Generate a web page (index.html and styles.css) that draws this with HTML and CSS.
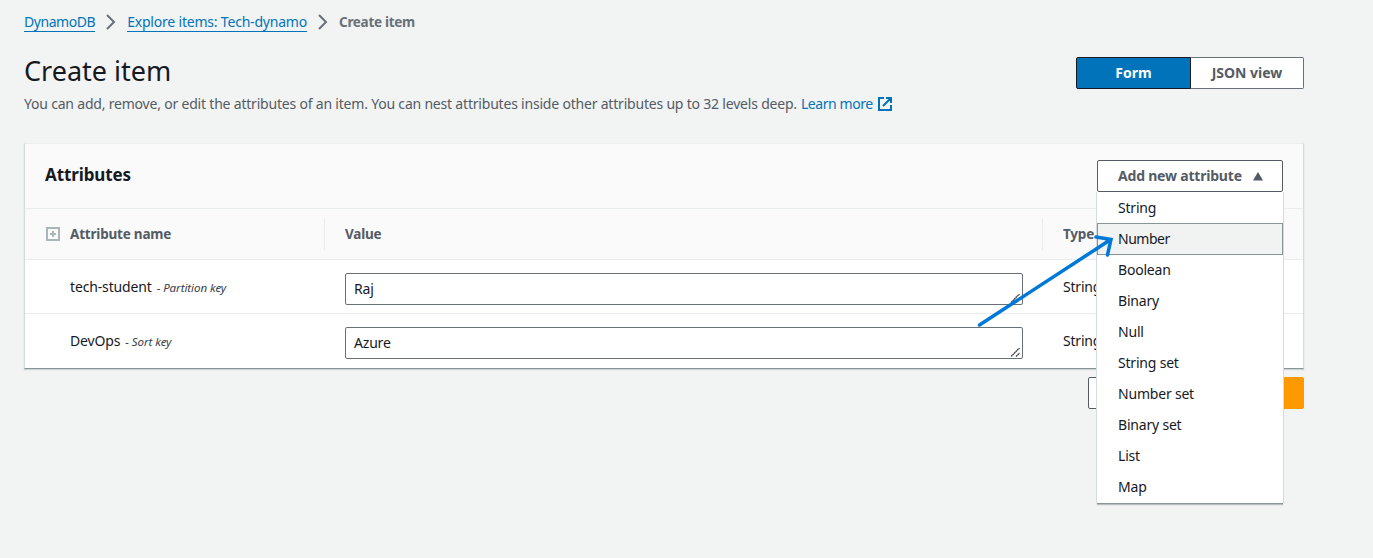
FILE: index.html
```html
<!DOCTYPE html>
<html lang="en">
<head>
<meta charset="utf-8">
<title>Create item</title>
<link rel="stylesheet" href="styles.css">
</head>
<body>
<nav class="breadcrumbs" aria-label="Breadcrumbs">
  <a class="crumb crumb-service" href="#">DynamoDB</a>
  <svg class="chevron" viewBox="0 0 10 16"><path d="M1 1l7 7-7 7"/></svg>
  <a class="crumb" href="#">Explore items: Tech-dynamo</a>
  <svg class="chevron" viewBox="0 0 10 16"><path d="M1 1l7 7-7 7"/></svg>
  <span class="crumb-current">Create item</span>
</nav>
<header class="page-header">
  <div class="intro">
    <h1 class="title">Create item</h1>
    <p class="description"><span class="lead">You can add, remove, or edit the attributes of an item. You can nest attributes inside other attributes up to 32 levels deep.</span><a class="learn" href="#">Learn more</a><svg class="external" viewBox="0 0 14 14"><path d="M6 1H1v12h12V8M8 1h5v5M13 1L5 9"/></svg></p>
  </div>
  <div class="segments">
    <button class="segment segment-active">Form</button>
    <button class="segment">JSON view</button>
  </div>
</header>
<main class="panel">
  <div class="panel-header">
    <h2 class="panel-title">Attributes</h2>
    <div class="dropdown">
      <button class="trigger"><span class="trigger-label">Add new attribute</span><svg class="caret" viewBox="0 0 10 8"><path d="M5 0L9.500 7.500H.5z"/></svg></button>
      <ul class="menu">
        <li class="option">String</li>
        <li class="option option-highlighted">Number</li>
        <li class="option">Boolean</li>
        <li class="option">Binary</li>
        <li class="option">Null</li>
        <li class="option">String set</li>
        <li class="option">Number set</li>
        <li class="option">Binary set</li>
        <li class="option">List</li>
        <li class="option">Map</li>
      </ul>
    </div>
  </div>
  <div class="row row-head">
    <div class="cell cell-name"><svg class="expand" viewBox="0 0 14 14"><path d="M1 1h12v12H1zM7 4v6M4 7h6"/></svg><span>Attribute name</span></div>
    <div class="cell cell-value"><span>Value</span></div>
    <div class="cell"><span>Type</span></div>
  </div>
  <div class="row">
    <div class="cell cell-name"><span class="key-name">tech-student</span><em class="key-kind">- Partition key</em></div>
    <div class="cell cell-value"><div class="field"><span>Raj</span><svg class="grip" viewBox="0 0 9 9"><path d="M0 8.500L8.500 0M5 8.500L8.500 5"/></svg></div></div>
    <div class="cell"><span>String</span></div>
  </div>
  <div class="row">
    <div class="cell cell-name"><span class="key-name">DevOps</span><em class="key-kind">- Sort key</em></div>
    <div class="cell cell-value"><div class="field"><span>Azure</span><svg class="grip" viewBox="0 0 9 9"><path d="M0 8.500L8.500 0M5 8.500L8.500 5"/></svg></div></div>
    <div class="cell"><span>String</span></div>
  </div>
  <svg class="pointer" viewBox="0 0 140 95"><path d="M4.500 91L135 6M121 3L136 5.500L132.500 21"/></svg>
</main>
<footer class="actions">
  <button class="action" aria-label="Cancel"></button>
  <button class="action action-primary" aria-label="Create item"></button>
</footer>
</body>
</html>
```
FILE: styles.css
```css
* { box-sizing: border-box; }
body { margin: 0; height: 558px; overflow: hidden; padding: 12px 69px 0 24px; background: #f2f3f3; color: #16191f; font: 14px/20px "Noto Sans", sans-serif; letter-spacing: -0.2px; }
a { color: #0073bb; text-decoration: none; }
button { font: inherit; font-weight: 700; letter-spacing: 0; color: #545b64; background: #fff; border: 1px solid #545b64; border-radius: 2px; padding: 0; height: 32px; }
svg { fill: none; flex: none; }
.breadcrumbs { display: flex; align-items: center; height: 20px; }
.crumb { height: 20px; border-bottom: 1px solid #0073bb; }
.crumb-service { letter-spacing: -0.45px; }
.chevron { width: 10px; height: 16px; margin: 0 11px; stroke: #687078; stroke-width: 2; }
.crumb-current { font-weight: 700; font-size: 13.5px; letter-spacing: -0.3px; color: #687078; }
.page-header { display: flex; justify-content: space-between; margin-top: 20px; }
.title { margin: 0; font-size: 27px; font-weight: 400; line-height: 38px; letter-spacing: 0; height: 36px; }
.description { margin: 6px 0 0; display: flex; align-items: center; color: #545b64; white-space: nowrap; }
.learn { margin-left: 4px; letter-spacing: -0.43px; }
.external { width: 14px; height: 14px; margin-left: 5px; stroke: #0073bb; stroke-width: 2; }
.segments { display: flex; margin-top: 5px; }
.segment { width: 113px; border-radius: 0 2px 2px 0; border-left: 0; border-color: #687078; }
.segment-active { width: 115px; background: #0073bb; color: #fff; border: 1px solid #16191f; border-radius: 2px 0 0 2px; }
.panel { position: relative; margin-top: 29px; background: #fff; width: 1280px; height: 226px; border: 1px solid #d5dbdb; border-top-color: #eaeded; border-bottom-color: #879596; box-shadow: 0 1px 1px rgba(0, 28, 36, 0.15); }
.panel-header { display: flex; justify-content: space-between; height: 65px; padding: 16px 20px 0; background: #fafafa; border-bottom: 1px solid #eaeded; }
.panel-title { margin: 4px 0 0; font-size: 17px; line-height: 22px; font-weight: 700; letter-spacing: -0.1px; }
.dropdown { position: relative; width: 186px; }
.trigger { width: 186px; padding-left: 20px; display: flex; align-items: center; }
.trigger-label { letter-spacing: -0.2px; }
.caret { width: 12px; height: 9px; margin-left: 10px; fill: #545b64; }
.menu { position: absolute; z-index: 2; top: 32px; left: 0; width: 186px; margin: 0; padding: 0 0 1px; list-style: none; background: #fff; box-shadow: 0 1px 0 #879596, -1px 0 0 #d5dbdb, 1px 0 0 #d5dbdb, 0 2px 1px rgba(0, 28, 36, 0.25); }
.option { height: 31px; padding: 6px 21px; line-height: 20px; letter-spacing: -0.2px; }
.option-highlighted { margin: 0 0 -1px; height: 32px; padding: 5px 20px; letter-spacing: -0.5px; background: #f1f3f3; border: 1px solid #879596; }
.row { display: grid; grid-template-columns: 300px 718px 260px; height: 54px; border-bottom: 1px solid #eaeded; }
.row:last-of-type { border: 0; }
.row-head { height: 51px; background: #fafafa; color: #545b64; font-weight: 700; font-size: 13.5px; }
.cell { display: flex; align-items: center; padding-left: 20px; }
.cell-name { padding-left: 45px; }
.row-head .cell-name { padding-left: 21px; }
.row-head .cell-value { margin: 9px 0 9px -1px; border: solid #eaeded; border-width: 0 1px; }
.expand { width: 14px; height: 14px; margin-right: 10px; stroke: #aab7b8; stroke-width: 2; }
.key-name { letter-spacing: -0.15px; }
.key-kind { font-size: 11.5px; line-height: 22px; margin: 2px 0 0 5px; letter-spacing: -0.05px; color: #3a4048; }
.field { position: relative; top: 2px; width: 678px; height: 32px; border: 1px solid #687078; border-radius: 2px; padding: 5px 8px; }
.grip { position: absolute; right: 2px; bottom: 1px; width: 9px; height: 9px; stroke: #444; stroke-width: 1.4; stroke-dasharray: 1.8 0.4; }
.pointer { position: absolute; z-index: 3; left: 950px; top: 90px; width: 140px; height: 95px; stroke: #0078d7; stroke-width: 3.5; stroke-linecap: round; }
.actions { display: flex; justify-content: flex-end; margin-top: 8px; }
.action { width: 80px; }
.action-primary { margin-left: 8px; width: 128px; background: #ff9900; border-color: #ff9900; }
```
